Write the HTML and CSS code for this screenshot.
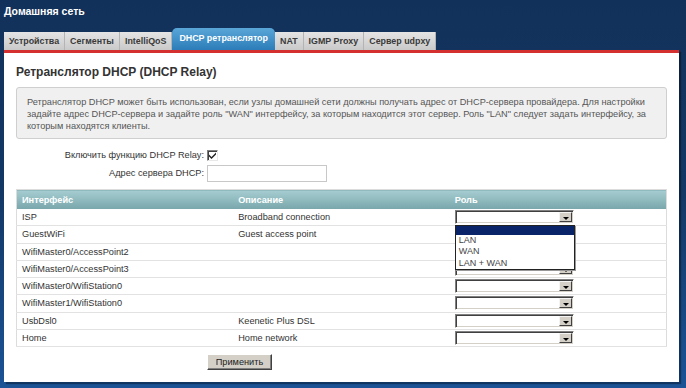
FILE: index.html
```html
<!DOCTYPE html>
<html lang="ru">
<head>
    <meta charset="UTF-8">
    <meta name="viewport" content="width=device-width, initial-scale=1.0">
    <title>Домашняя сеть</title>
    <link rel="stylesheet" href="styles.css">
</head>
<body>
    <h1 class="page-title">Домашняя сеть</h1>
    <ul class="tabs">
        <li>Устройства</li>
        <li>Сегменты</li>
        <li>IntelliQoS</li>
        <li class="active">DHCP ретранслятор</li>
        <li>NAT</li>
        <li>IGMP Proxy</li>
        <li>Сервер udpxy</li>
    </ul>
    <div class="panel">
        <h2>Ретранслятор DHCP (DHCP Relay)</h2>
        <div class="note">
            Ретранслятор DHCP может быть использован, если узлы домашней сети должны получать адрес от DHCP-сервера провайдера. Для настройки<br>
            задайте адрес DHCP-сервера и задайте роль "WAN" интерфейсу, за которым находится этот сервер. Роль "LAN" следует задать интерфейсу, за<br>
            которым находятся клиенты.
        </div>
        <div class="form">
            <label>Включить функцию DHCP Relay:</label>
            <span class="checkbox">
                <svg width="9" height="9" viewBox="0 0 9 9"><path d="M1 3.5 L3.5 6 L8 1.5 L8 3.5 L3.5 8 L1 5.5 Z" fill="#222"/></svg>
            </span>
            <label>Адрес сервера DHCP:</label>
            <span class="textbox"></span>
        </div>
        <table class="grid">
            <thead>
                <tr><th>Интерфейс</th><th>Описание</th><th>Роль</th></tr>
            </thead>
            <tbody>
                <tr>
                    <td>ISP</td><td>Broadband connection</td>
                    <td>
                        <div class="select-wrap">
                            <span class="select"><span class="arrow"></span></span>
                            <ul class="dropdown">
                                <li class="selected"></li>
                                <li>LAN</li>
                                <li>WAN</li>
                                <li>LAN + WAN</li>
                            </ul>
                        </div>
                    </td>
                </tr>
                <tr><td>GuestWiFi</td><td>Guest access point</td><td><span class="select"><span class="arrow"></span></span></td></tr>
                <tr><td>WifiMaster0/AccessPoint2</td><td></td><td><span class="select"><span class="arrow"></span></span></td></tr>
                <tr><td>WifiMaster0/AccessPoint3</td><td></td><td><span class="select"><span class="arrow"></span></span></td></tr>
                <tr><td>WifiMaster0/WifiStation0</td><td></td><td><span class="select"><span class="arrow"></span></span></td></tr>
                <tr><td>WifiMaster1/WifiStation0</td><td></td><td><span class="select"><span class="arrow"></span></span></td></tr>
                <tr><td>UsbDsl0</td><td>Keenetic Plus DSL</td><td><span class="select"><span class="arrow"></span></span></td></tr>
                <tr><td>Home</td><td>Home network</td><td><span class="select"><span class="arrow"></span></span></td></tr>
            </tbody>
        </table>
        <div class="actions">
            <button class="btn">Применить</button>
        </div>
    </div>
</body>
</html>
```

FILE: styles.css
```css
body {
    margin: 0;
    height: 388px;
    overflow: hidden;
    font-family: "Liberation Sans", Arial, sans-serif;
    font-size: 9.2px;
    color: #333;
    background: linear-gradient(to bottom, #12315a 0%, #133866 50%, #1b5396 100%);
}

.page-title {
    margin: 0;
    padding: 4px 4px 0;
    height: 24px;
    font-size: 10.5px;
    line-height: 14px;
    font-weight: bold;
    color: #fff;
}

.tabs {
    display: flex;
    align-items: flex-end;
    height: 22px;
    margin: 0 0 0 4px;
    padding: 0;
    list-style: none;
}

.tabs li {
    height: 18px;
    line-height: 18px;
    padding: 0 5px;
    font-size: 8.9px;
    font-weight: bold;
    color: #3a3a3a;
    background: linear-gradient(to bottom, #e4e4e4, #c9c9c9);
    border-right: 1px solid #b4b4b4;
    box-sizing: border-box;
}

.tabs li.active {
    height: 22px;
    line-height: 21px;
    padding: 0 7px;
    color: #fff;
    border-right: none;
    border-radius: 5px 5px 0 0;
    background: linear-gradient(to bottom, #5aa6d8, #2b7cb8);
}

.panel {
    width: 675px;
    height: 332px;
    margin-left: 4px;
    padding: 11px 12px 0;
    box-sizing: border-box;
    background-color: #fff;
    border-top: 3px solid #d3302f;
    box-shadow: 2px 2px 1px rgba(0, 0, 0, 0.35);
}

.panel h2 {
    margin: 0 0 7px;
    font-size: 12px;
    line-height: 16px;
    color: #333;
}

.note {
    padding: 8px 10px 6px;
    line-height: 12px;
    white-space: nowrap;
    color: #555;
    background-color: #f0f0f0;
    border: 1px solid #cfcfcf;
    border-radius: 3px;
}

.form {
    display: grid;
    grid-template-columns: 188px auto;
    grid-template-rows: 14px 18px;
    column-gap: 3px;
    row-gap: 2px;
    margin-top: 9px;
    align-items: center;
}

.form label {
    text-align: right;
    color: #333;
}

.checkbox {
    display: flex;
    align-items: center;
    justify-content: center;
    width: 11px;
    height: 11px;
    box-sizing: border-box;
    background-color: #fff;
    border: 1px solid;
    border-color: #808080 #e8e8e8 #e8e8e8 #808080;
    box-shadow: inset 1px 1px 0 #404040;
}

.textbox {
    display: block;
    width: 120px;
    height: 17px;
    box-sizing: border-box;
    border: 1px solid #c8c8c8;
    background-color: #fff;
}

.grid {
    width: 651px;
    margin-top: 7px;
    border-collapse: collapse;
    border: 1px solid #dcdcdc;
    table-layout: fixed;
}

.grid th {
    height: 19px;
    padding: 0 5px;
    text-align: left;
    color: #fff;
    font-weight: bold;
    background: linear-gradient(to bottom, #a6cdd1, #78a6ab);
}

.grid td {
    height: 16.25px;
    padding: 0 5px;
    border-bottom: 1px solid #e2e2e2;
    color: #333;
    vertical-align: middle;
}

.select-wrap {
    position: relative;
}

.select {
    display: block;
    position: relative;
    width: 119px;
    height: 14px;
    box-sizing: border-box;
    background-color: #fff;
    border: 1px solid;
    border-color: #808080 #fff #fff #808080;
    box-shadow: inset 1px 1px 0 #404040, inset -1px -1px 0 #d4d0c8;
}

.arrow {
    position: absolute;
    right: 1px;
    top: 1px;
    bottom: 1px;
    width: 13px;
    box-sizing: border-box;
    background-color: #d4d0c8;
    border: 1px solid;
    border-color: #f4f4f4 #404040 #404040 #f4f4f4;
}

.arrow::after {
    content: '';
    position: absolute;
    left: 3px;
    top: 4px;
    border-left: 3px solid transparent;
    border-right: 3px solid transparent;
    border-top: 3px solid #000;
}

.dropdown {
    position: absolute;
    top: 15px;
    left: 0;
    width: 120px;
    margin: 0;
    padding: 0;
    list-style: none;
    box-sizing: border-box;
    background-color: #fff;
    border: 1px solid #222;
    box-shadow: 1px 1px 0 #999;
    z-index: 2;
}

.dropdown li {
    height: 11.3px;
    line-height: 11px;
    padding-left: 3px;
    font-size: 9px;
    color: #444;
}

.dropdown li.selected {
    height: 9px;
    background-color: #0a246a;
}

.actions {
    margin-top: 7px;
    padding-left: 191px;
}

.btn {
    width: 65px;
    height: 16px;
    padding: 0;
    font-family: "Liberation Sans", Arial, sans-serif;
    font-size: 9.2px;
    color: #222;
    background-color: #d4d0c8;
    border: 1px solid;
    border-color: #fff #404040 #404040 #fff;
    box-shadow: inset -1px -1px 0 #808080;
}
```
